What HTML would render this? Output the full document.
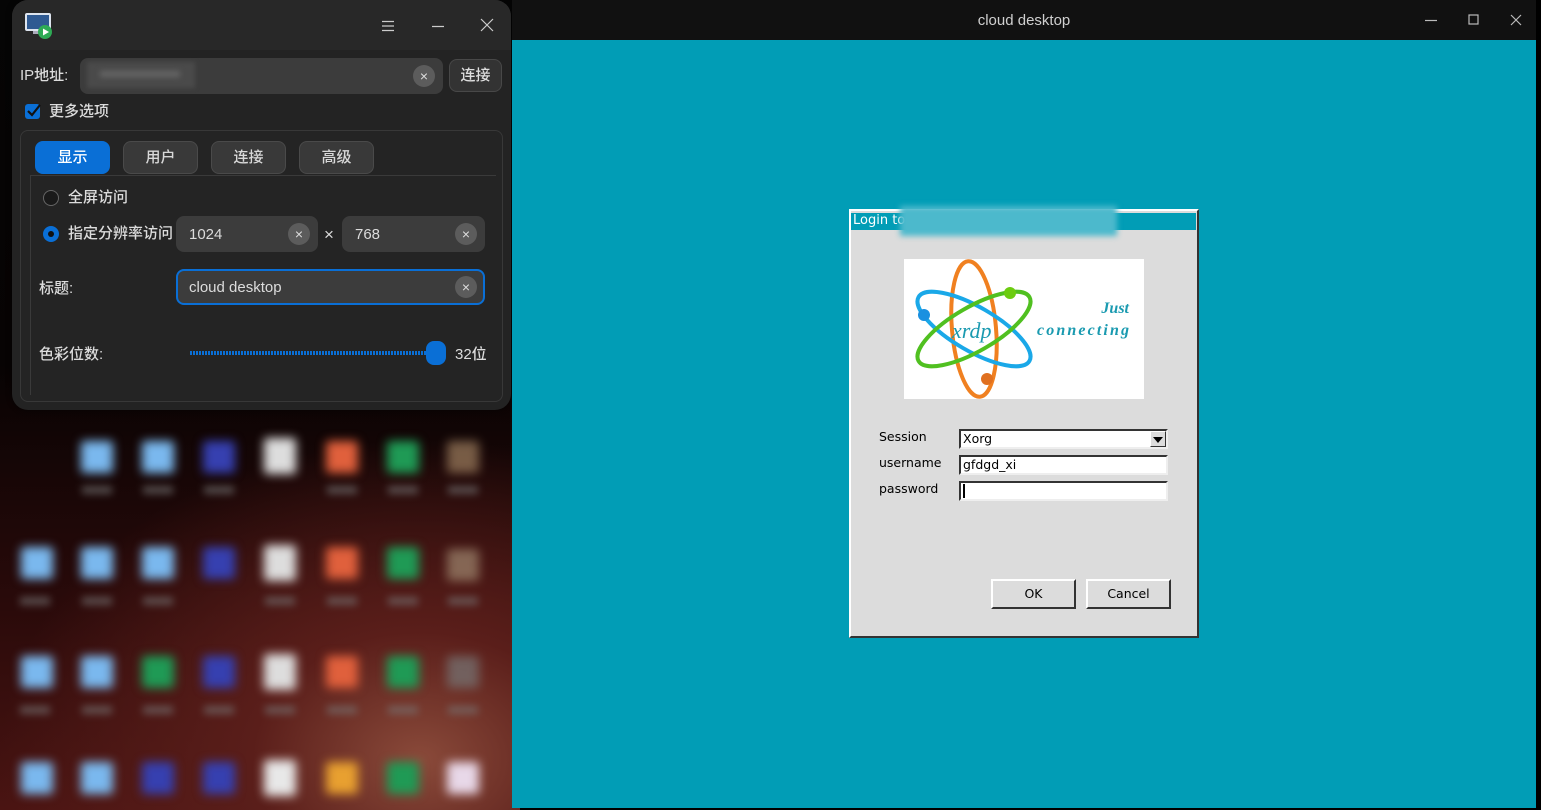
<!DOCTYPE html>
<html><head><meta charset="utf-8"><style>
*{box-sizing:border-box;margin:0;padding:0}
body{width:1541px;height:810px;overflow:hidden;position:relative;background:#000;font-family:"Liberation Sans","Noto Sans CJK SC",sans-serif}
.abs{position:absolute}
#desk{left:0;top:0;width:520px;height:810px;background:radial-gradient(ellipse 420px 320px at 420px 760px,#8a4a3a 0%,#5a1e1a 40%,rgba(40,8,8,0) 100%),linear-gradient(180deg,#050505 0%,#070303 45%,#2a0a0a 75%,#4a1412 100%)}
.ic{position:absolute;width:32px;height:32px;filter:blur(5px);border-radius:3px}
.lb{position:absolute;height:8px;width:30px;background:#777;filter:blur(4px);opacity:.6}
#lw{left:12px;top:0;width:499px;height:410px;background:#232323;border-radius:16px;overflow:hidden;box-shadow:0 0 6px rgba(0,0,0,.6)}
#lw .tb{position:absolute;left:0;top:0;width:100%;height:50px;background:#282828}
.t{position:absolute;color:#dcdcdc;font-size:15px;line-height:1;white-space:nowrap;font-weight:500}
.inp{position:absolute;background:#3c3c3c;border-radius:8px}
.clr{position:absolute;width:22px;height:22px;border-radius:50%;background:#5c5c5c;color:#ddd;font-size:14px;line-height:22px;text-align:center}
.tab{position:absolute;top:141px;height:33px;width:75px;border-radius:8px;background:#393939;border:1px solid #4a4a4a;color:#d8d8d8;font-size:15px;line-height:31px;text-align:center;font-weight:500}
#rw{left:512px;top:0;width:1024px;height:808px;background:#019db6}
#rw .tb{position:absolute;left:0;top:0;width:100%;height:40px;background:#111}
#dlg{left:849px;top:209px;width:350px;height:429px;background:#dcdcdc;border:2px solid;border-color:#fff #333 #333 #fff}
.x{font-family:"DejaVu Sans",sans-serif;font-size:12.5px;color:#000;position:absolute;white-space:nowrap}
.fld{position:absolute;left:959px;width:209px;height:20px;background:#fff;border:2px solid;border-color:#333 #eee #eee #333}
.btn{position:absolute;top:579px;width:85px;height:30px;background:#dcdcdc;border:2px solid;border-color:#fff #333 #333 #fff;text-align:center;line-height:26px}
</style></head><body>
<div id="desk" class="abs">
<div class="ic" style="left:81px;top:441px;background:#7ab8ee"></div>
<div class="ic" style="left:142px;top:441px;background:#7ab8ee"></div>
<div class="ic" style="left:203px;top:441px;background:#3640b0"></div>
<div class="ic" style="left:264px;top:438px;background:#ddd;height:36px"></div>
<div class="ic" style="left:326px;top:441px;background:#e0603c"></div>
<div class="ic" style="left:387px;top:441px;background:#1f9a55"></div>
<div class="ic" style="left:447px;top:441px;background:#a08060;opacity:.7"></div>
<div class="ic" style="left:21px;top:547px;background:#7ab8ee"></div>
<div class="ic" style="left:81px;top:547px;background:#7ab8ee"></div>
<div class="ic" style="left:142px;top:547px;background:#7ab8ee"></div>
<div class="ic" style="left:203px;top:547px;background:#3640b0"></div>
<div class="ic" style="left:264px;top:545px;background:#ddd;height:36px"></div>
<div class="ic" style="left:326px;top:547px;background:#e0603c"></div>
<div class="ic" style="left:387px;top:547px;background:#1f9a55"></div>
<div class="ic" style="left:447px;top:549px;background:#a08870;opacity:.7"></div>
<div class="ic" style="left:21px;top:656px;background:#7ab8ee"></div>
<div class="ic" style="left:81px;top:656px;background:#7ab8ee"></div>
<div class="ic" style="left:142px;top:656px;background:#1f9a55"></div>
<div class="ic" style="left:203px;top:656px;background:#3640b0"></div>
<div class="ic" style="left:264px;top:654px;background:#ddd;height:36px"></div>
<div class="ic" style="left:326px;top:656px;background:#e0603c"></div>
<div class="ic" style="left:387px;top:656px;background:#1f9a55"></div>
<div class="ic" style="left:447px;top:656px;background:#777;opacity:.7"></div>
<div class="ic" style="left:21px;top:762px;background:#7ab8ee"></div>
<div class="ic" style="left:81px;top:762px;background:#7ab8ee"></div>
<div class="ic" style="left:142px;top:762px;background:#3640b0"></div>
<div class="ic" style="left:203px;top:762px;background:#3640b0"></div>
<div class="ic" style="left:264px;top:760px;background:#e8e8e8;height:36px"></div>
<div class="ic" style="left:326px;top:762px;background:#e8a030"></div>
<div class="ic" style="left:387px;top:762px;background:#1f9a55"></div>
<div class="ic" style="left:447px;top:762px;background:#e8d8e8"></div>
<div class="lb" style="left:82px;top:486px"></div><div class="lb" style="left:143px;top:486px"></div><div class="lb" style="left:204px;top:486px"></div><div class="lb" style="left:327px;top:486px"></div><div class="lb" style="left:388px;top:486px"></div><div class="lb" style="left:448px;top:486px"></div>
<div class="lb" style="left:20px;top:597px"></div><div class="lb" style="left:82px;top:597px"></div><div class="lb" style="left:143px;top:597px"></div><div class="lb" style="left:265px;top:597px"></div><div class="lb" style="left:327px;top:597px"></div><div class="lb" style="left:388px;top:597px"></div><div class="lb" style="left:448px;top:597px"></div>
<div class="lb" style="left:20px;top:706px"></div><div class="lb" style="left:82px;top:706px"></div><div class="lb" style="left:143px;top:706px"></div><div class="lb" style="left:204px;top:706px"></div><div class="lb" style="left:265px;top:706px"></div><div class="lb" style="left:327px;top:706px"></div><div class="lb" style="left:388px;top:706px"></div><div class="lb" style="left:448px;top:706px"></div>
</div>

<div id="lw" class="abs">
<div class="tb"></div>
<svg class="abs" style="left:12px;top:11px" width="30" height="30" viewBox="0 0 30 30"><rect x="1" y="2" width="26" height="18" rx="2" fill="#dde4ee"/><rect x="3" y="4" width="22" height="14" fill="#2f5a92"/><rect x="9" y="20" width="10" height="3" fill="#aab"/><circle cx="21" cy="21" r="7" fill="#2eaa55"/><path d="M19 17.5 L25 21 L19 24.5Z" fill="#fff"/></svg>
<svg class="abs" style="left:369px;top:19px" width="14" height="14"><path d="M1 2.5H13M1 7H13M1 11.5H13" stroke="#ccc" stroke-width="1.2"/></svg>
<svg class="abs" style="left:419px;top:19px" width="14" height="14"><path d="M1 7.5H13" stroke="#ccc" stroke-width="1.2"/></svg>
<svg class="abs" style="left:468px;top:18px" width="14" height="14"><path d="M1 1L13 13M13 1L1 13" stroke="#ccc" stroke-width="1.2"/></svg>

<div class="t" style="left:8px;top:68px">IP地址:</div>
<div class="inp" style="left:68px;top:58px;width:363px;height:36px"></div>
<div class="abs" style="left:75px;top:62px;width:108px;height:26px;background:#4a4a4a;filter:blur(2px)"></div>
<div class="abs" style="left:88px;top:71px;width:80px;height:6px;background:#666;filter:blur(3px)"></div>
<div class="clr" style="left:401px;top:65px">×</div>
<div class="abs" style="left:437px;top:59px;width:53px;height:33px;border-radius:8px;background:#333;border:1px solid #484848;color:#ddd;font-size:15px;line-height:31px;text-align:center;font-weight:500">连接</div>

<div class="abs" style="left:13px;top:104px;width:15px;height:15px;background:#0a6fd6;border-radius:3px"></div>
<svg class="abs" style="left:13px;top:102px" width="18" height="18"><path d="M3 9L7 13L15 3" stroke="#111" stroke-width="2.2" fill="none"/></svg>
<div class="t" style="left:37px;top:104px">更多选项</div>

<div class="abs" style="left:8px;top:130px;width:483px;height:272px;border:1px solid #383838;border-radius:8px;background:#242424"></div>
<div class="tab" style="left:23px;background:#0a6fd6;border-color:#0a6fd6;color:#fff">显示</div>
<div class="tab" style="left:111px">用户</div>
<div class="tab" style="left:199px">连接</div>
<div class="tab" style="left:287px">高级</div>
<div class="abs" style="left:18px;top:175px;width:466px;height:1px;background:#3a3a3a"></div>
<div class="abs" style="left:18px;top:175px;width:1px;height:220px;background:#3a3a3a"></div>

<div class="abs" style="left:31px;top:190px;width:16px;height:16px;border-radius:50%;border:1px solid #666;background:#1a1a1a"></div>
<div class="t" style="left:56px;top:190px">全屏访问</div>
<div class="abs" style="left:31px;top:226px;width:16px;height:16px;border-radius:50%;background:#0a6fd6"></div>
<div class="abs" style="left:36px;top:231px;width:6px;height:6px;border-radius:50%;background:#111"></div>
<div class="t" style="left:56px;top:226px">指定分辨率访问</div>
<div class="inp" style="left:164px;top:216px;width:142px;height:36px"></div>
<div class="t" style="left:177px;top:227px">1024</div>
<div class="clr" style="left:276px;top:223px">×</div>
<div class="t" style="left:312px;top:226px;font-size:17px">×</div>
<div class="inp" style="left:330px;top:216px;width:143px;height:36px"></div>
<div class="t" style="left:343px;top:227px">768</div>
<div class="clr" style="left:443px;top:223px">×</div>

<div class="t" style="left:27px;top:281px">标题:</div>
<div class="inp" style="left:164px;top:269px;width:309px;height:36px;border:2px solid #0a6fd6"></div>
<div class="t" style="left:177px;top:280px">cloud desktop</div>
<div class="clr" style="left:443px;top:276px">×</div>

<div class="t" style="left:27px;top:347px">色彩位数:</div>
<div class="abs" style="left:178px;top:351px;width:240px;height:4px;background:repeating-linear-gradient(90deg,#0a6fd6 0 2px,transparent 2px 3px)"></div>
<div class="abs" style="left:414px;top:341px;width:20px;height:24px;border-radius:8px;background:#0a6fd6"></div>
<div class="t" style="left:443px;top:347px">32位</div>
</div>

<div id="rw" class="abs">
<div class="tb"></div>
<div class="abs" style="left:0;top:12px;width:1024px;text-align:center;color:#cfcfcf;font-size:15px">cloud desktop</div>
<svg class="abs" style="left:912px;top:13px" width="14" height="14"><path d="M1 7.5H13" stroke="#bbb" stroke-width="1.2"/></svg>
<svg class="abs" style="left:955px;top:13px" width="14" height="14"><rect x="2" y="2" width="9" height="9" stroke="#bbb" stroke-width="1.2" fill="none"/></svg>
<svg class="abs" style="left:997px;top:13px" width="14" height="14"><path d="M2 2L12 12M12 2L2 12" stroke="#bbb" stroke-width="1.2"/></svg>
</div>

<div id="dlg" class="abs"></div>
<div class="abs" style="left:851px;top:213px;width:345px;height:17px;background:#019db6"></div>
<div class="x" style="left:853px;top:213px;color:#fff;font-size:13px">Login to</div>
<div class="abs" style="left:900px;top:206px;width:217px;height:30px;background:#4cb9cc;filter:blur(3px)"></div>

<svg class="abs" style="left:904px;top:259px" width="240" height="140" viewBox="0 0 240 140">
<rect width="240" height="140" fill="#fff"/>
<g fill="none">
<ellipse cx="70" cy="70" rx="22" ry="68" transform="rotate(-5 70 70)" stroke="#f08020" stroke-width="4"/>
<ellipse cx="70" cy="70" rx="64" ry="22" transform="rotate(30 70 70)" stroke="#1aa8e8" stroke-width="4"/>
<ellipse cx="70" cy="70" rx="64" ry="22" transform="rotate(-30 70 70)" stroke="#50c020" stroke-width="4"/>
</g>
<circle cx="106" cy="34" r="6" fill="#6ccc10"/>
<circle cx="20" cy="56" r="6" fill="#1a90e0"/>
<circle cx="83" cy="120" r="6" fill="#e07020"/>
<text x="48" y="79" font-family="Liberation Serif,serif" font-style="italic" font-size="22" fill="#1a9ab0">xrdp</text>
<text x="225" y="54" text-anchor="end" font-family="Liberation Serif,serif" font-style="italic" font-weight="bold" font-size="16" fill="#1a9ab0">Just</text>
<text x="225" y="76" text-anchor="end" font-family="Liberation Serif,serif" font-style="italic" font-weight="bold" font-size="16" fill="#1a9ab0" textLength="92">connecting</text>
</svg>

<div class="x" style="left:879px;top:429px">Session</div>
<div class="x" style="left:879px;top:455px">username</div>
<div class="x" style="left:879px;top:481px">password</div>
<div class="fld" style="top:429px"></div>
<div class="x" style="left:963px;top:431px">Xorg</div>
<div class="abs" style="left:1150px;top:431px;width:16px;height:16px;background:#dcdcdc;border:1px solid;border-color:#fff #333 #333 #fff"></div>
<svg class="abs" style="left:1152px;top:436px" width="12" height="8"><path d="M1 1H11L6 7Z" fill="#000"/></svg>
<div class="fld" style="top:455px"></div>
<div class="x" style="left:963px;top:457px">gfdgd_xi</div>
<div class="fld" style="top:481px"></div>
<div class="abs" style="left:963px;top:484px;width:2px;height:14px;background:#000"></div>
<div class="btn x" style="left:991px">OK</div>
<div class="btn x" style="left:1086px">Cancel</div>
</body></html>
